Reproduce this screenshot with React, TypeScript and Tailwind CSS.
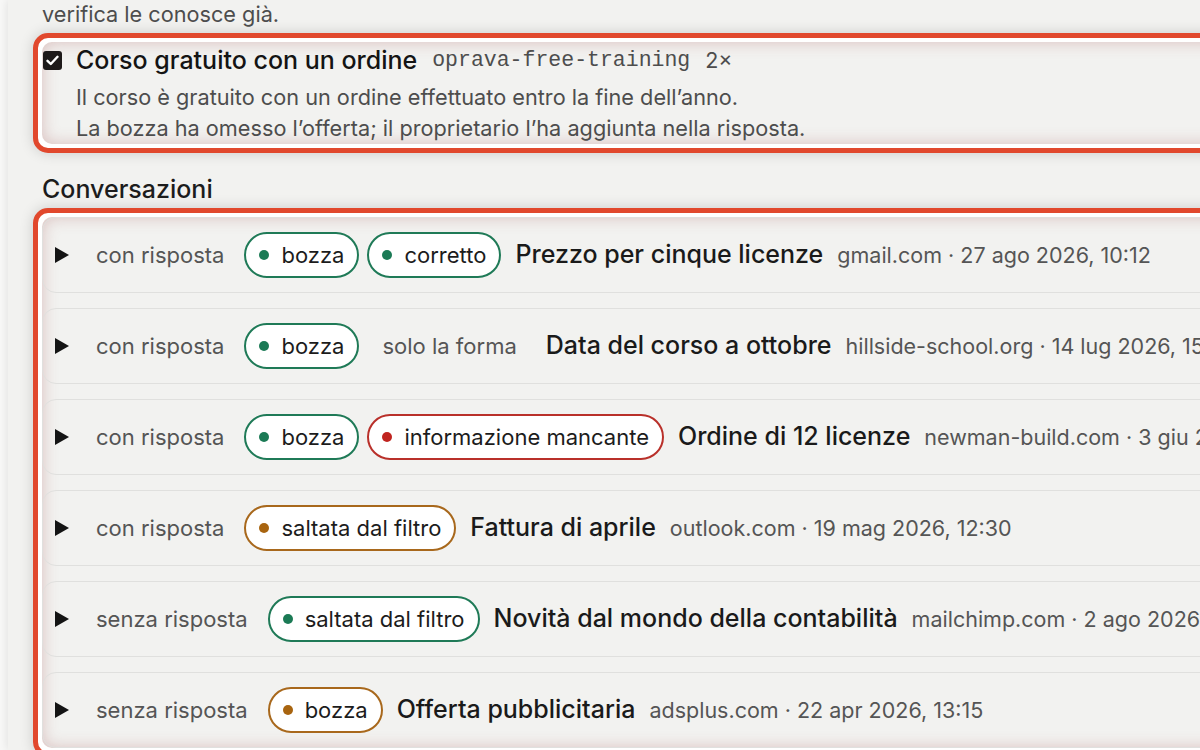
import React from "react";

type Tone = "green" | "red" | "amber" | "plain";

type Tag = { label: string; tone: Tone };

type Conversation = {
  status: string;
  tags: Tag[];
  subject: string;
  domain: string;
  when: string;
};

const conversations: Conversation[] = [
  {
    status: "con risposta",
    tags: [
      { label: "bozza", tone: "green" },
      { label: "corretto", tone: "green" },
    ],
    subject: "Prezzo per cinque licenze",
    domain: "gmail.com",
    when: "27 ago 2026, 10:12",
  },
  {
    status: "con risposta",
    tags: [
      { label: "bozza", tone: "green" },
      { label: "solo la forma", tone: "plain" },
    ],
    subject: "Data del corso a ottobre",
    domain: "hillside-school.org",
    when: "14 lug 2026, 15:40",
  },
  {
    status: "con risposta",
    tags: [
      { label: "bozza", tone: "green" },
      { label: "informazione mancante", tone: "red" },
    ],
    subject: "Ordine di 12 licenze",
    domain: "newman-build.com",
    when: "3 giu 2026, 09:05",
  },
  {
    status: "con risposta",
    tags: [{ label: "saltata dal filtro", tone: "amber" }],
    subject: "Fattura di aprile",
    domain: "outlook.com",
    when: "19 mag 2026, 12:30",
  },
  {
    status: "senza risposta",
    tags: [{ label: "saltata dal filtro", tone: "green" }],
    subject: "Novità dal mondo della contabilità",
    domain: "mailchimp.com",
    when: "2 ago 2026, 08:00",
  },
  {
    status: "senza risposta",
    tags: [{ label: "bozza", tone: "amber" }],
    subject: "Offerta pubblicitaria",
    domain: "adsplus.com",
    when: "22 apr 2026, 13:15",
  },
];

const toneBorder: Record<Tone, string> = {
  green: "border-[#1f7a57] bg-white",
  red: "border-[#b9302a] bg-white",
  amber: "border-[#a8681c] bg-white",
  plain: "border-transparent",
};

const toneDot: Record<Tone, string> = {
  green: "bg-[#1b7a55]",
  red: "bg-[#c0241f]",
  amber: "bg-[#a8640f]",
  plain: "",
};

function Pill({ tag }: { tag: Tag }) {
  return (
    <span
      className={`flex h-[46px] items-center gap-[12px] rounded-full border-2 px-[13px] text-[22px] ${toneBorder[tag.tone]} ${
        tag.tone === "plain" ? "text-[#555555]" : "text-[#1c1c1c]"
      }`}
    >
      {tag.tone !== "plain" && <span className={`h-[10px] w-[10px] rounded-full ${toneDot[tag.tone]}`} />}
      {tag.label}
    </span>
  );
}

function Highlight({ children }: { children: React.ReactNode }) {
  return (
    <div className="rounded-[15px] border-[5px] border-[#e1482d] bg-white p-[4px] shadow-[0_0_14px_rgba(0,0,0,0.16)]">
      <div className="rounded-[10px] bg-[#f2f2f0] shadow-[inset_0_0_16px_rgba(160,70,70,0.3)]">{children}</div>
    </div>
  );
}

function Row({ c }: { c: Conversation }) {
  return (
    <div className="flex h-[76px] items-center whitespace-nowrap rounded-[14px] border border-[#e0e0de] pl-[12px]">
      <svg width="14" height="16" viewBox="0 0 14 16" className="shrink-0">
        <path d="M0 0 L14 8 L0 16 Z" fill="#141414" />
      </svg>
      <span className="ml-[27px] text-[22px] text-[#555555]">{c.status}</span>
      <div className="ml-[20px] flex gap-[8px]">
        {c.tags.map((t) => (
          <Pill key={t.label} tag={t} />
        ))}
      </div>
      <span className="ml-[14px] text-[25px] font-medium text-[#1a1a1a]">{c.subject}</span>
      <span className="ml-[14px] text-[21.5px] text-[#555555]">
        {c.domain} · {c.when}
      </span>
    </div>
  );
}

export default function App() {
  return (
    <div className="h-[750px] w-[1200px] overflow-hidden bg-[#f8f8f7] font-['Inter',sans-serif]">
      <div className="ml-[8px] h-full w-[1400px] bg-[#f2f2f0] pl-[25px] shadow-[-2px_0_8px_rgba(0,0,0,0.08)]">
        <p className="pl-[9px] text-[21.7px] leading-[28px] text-[#4d4d4d]">verifica le conosce già.</p>
        <div className="mt-[5px]">
          <Highlight>
            <div className="flex flex-col pt-[4px]">
              <div className="flex items-center whitespace-nowrap leading-[28px]">
                <span className="ml-[1px] flex h-[19px] w-[19px] items-center justify-center rounded-[3px] bg-[#1e1a1a]">
                  <svg width="13" height="11" viewBox="0 0 13 11">
                    <path d="M1.5 5.8 L4.8 9 L11.5 1.8" stroke="white" strokeWidth="2.4" fill="none" strokeLinecap="round" strokeLinejoin="round" />
                  </svg>
                </span>
                <span className="ml-[14px] text-[25px] font-medium text-[#141414]">Corso gratuito con un ordine</span>
                <span className="ml-[15px] font-['Liberation_Mono',monospace] text-[21.5px] text-[#4d4d4d]">oprava-free-training</span>
                <span className="ml-[15px] text-[21.5px] text-[#4d4d4d]">2×</span>
              </div>
              <div className="mt-[8px] pl-[34px] text-[21.7px] leading-[31px] text-[#4d4d4d]">
                <p>Il corso è gratuito con un ordine effettuato entro la fine dell’anno.</p>
                <p>La bozza ha omesso l’offerta; il proprietario l’ha aggiunta nella risposta.</p>
              </div>
            </div>
          </Highlight>
        </div>
        <h2 className="mt-[22px] pl-[9px] text-[25px] font-medium leading-[28px] text-[#1c1c1c]">Conversazioni</h2>
        <div className="mt-[5px]">
          <Highlight>
            <div className="flex flex-col gap-[15px]">
              {conversations.map((c) => (
                <Row key={c.subject} c={c} />
              ))}
            </div>
          </Highlight>
        </div>
      </div>
    </div>
  );
}
